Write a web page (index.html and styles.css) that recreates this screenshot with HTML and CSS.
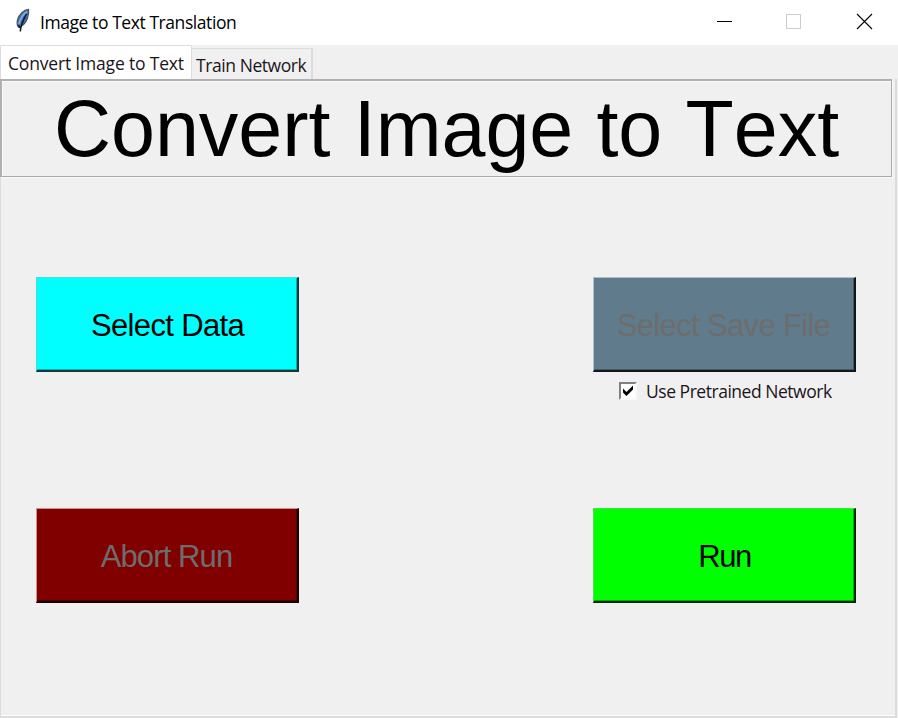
FILE: index.html
```html
<!DOCTYPE html>
<html lang="en">
<head>
<meta charset="utf-8">
<title>Image to Text Translation</title>
<link rel="stylesheet" href="styles.css">
</head>
<body>
<div class="window">
  <header class="titlebar">
    <svg class="feather" width="16" height="26" viewBox="0 0 16 26">
      <path d="M13.500 1.500C9 2 4 6 2.500 12C1.600 16 2.200 18 4 19.500C7.500 18 11 15 12.500 10C13.500 7 14 4 13.500 1.500Z" fill="#3f78b8" stroke="#50555c" stroke-width="1.300"/>
      <path d="M12 3.500C8 6 5.500 10 4 16" fill="none" stroke="#75aee6" stroke-width="1.800"/>
      <path d="M11.500 6C9 11 6 15 5.300 23.500M9 9L10 11M7 13L8.500 14.500M3.500 17L5 20" fill="none" stroke="#111c2a" stroke-width="1.500"/>
    </svg>
    <span class="caption">Image to Text Translation</span>
    <svg class="controls" width="157" height="18" viewBox="0 0 157 18" fill="none">
      <path d="M1 8.500H16" stroke="#000"/>
      <rect x="70.500" y="1.500" width="14" height="14" stroke="#ccc"/>
      <path d="M141 1L156 16M156 1L141 16" stroke="#000" stroke-width="1.100"/>
    </svg>
  </header>
  <nav class="tabs">
    <div class="tab active"><span>Convert Image to Text</span></div>
    <div class="tab"><span>Train Network</span></div>
  </nav>
  <main class="pane">
    <h1 class="heading">Convert Image to Text</h1>
    <div class="grid">
      <button class="btn cyan">Select Data</button>
      <div class="save">
        <button class="btn slate" disabled>Select Save File</button>
        <div class="check">
          <span class="box"><svg width="14" height="14" viewBox="0 0 14 14"><path d="M2 4.500L5.500 8L12 1.500V5.500L5.500 12L2 8.500Z" fill="#000"/></svg></span>
          <span class="check-text">Use Pretrained Network</span>
        </div>
      </div>
      <button class="btn maroon" disabled>Abort Run</button>
      <button class="btn green">Run</button>
    </div>
  </main>
</div>
</body>
</html>
```
FILE: styles.css
```css
* { box-sizing: border-box; }
body { margin: 0; background: #f0f0f0; font-family: "Open Sans", "Noto Sans", sans-serif; color: #000; }
.window { width: 898px; height: 718px; display: flex; flex-direction: column; overflow: hidden; }
.titlebar { height: 45px; flex: none; background: #fff; display: flex; align-items: flex-start; padding: 8px 25px 0 15px; }
.feather { flex: none; }
.caption { margin: 2px 0 0 9px; font-size: 17.5px; line-height: 24px; letter-spacing: -0.43px; white-space: nowrap; }
.controls { margin: 5px 0 0 auto; flex: none; }
.tabs { height: 34px; flex: none; display: flex; align-items: flex-end; }
.tab { height: 31px; width: 121px; border: 1px solid #dcdcdc; border-width: 1px 2px 0 0; padding-left: 4px; font-size: 17.5px; line-height: 32px; letter-spacing: -0.43px; white-space: nowrap; color: #1c1420; }
.tab.active { height: 34px; width: 192px; background: #fff; border-width: 1px 1px 0; padding-left: 7px; line-height: 34px; letter-spacing: -0.18px; }
.pane { flex: 1; width: 897px; border: 1px solid #dcdcdc; border-width: 0 2px 2px 1px; padding-right: 3px; box-shadow: inset 0 -1px #fff; }
.heading { margin: 0 0 0 -1px; width: 892px; height: 98px; border: 1px solid #a9a9a9; border-top: 2px solid #b0b0b0; border-left: 2px solid #b0b0b0; box-shadow: inset 1px 1px #fafafa, 1px 1px #fafafa; font: 79px/96px "Liberation Sans", Arial, sans-serif; font-kerning: none; word-spacing: 1.2px; text-align: center; white-space: nowrap; }
.grid { display: grid; grid-template-columns: 263px 263px; column-gap: 294px; grid-template-rows: 231px 95px; padding: 100px 0 0 35px; }
.btn { display: block; width: 263px; height: 95px; padding: 4px 0 0 1px; border: 1px solid; border-width: 1px 2px 2px 1px; border-radius: 0; font: 31px/88px "Liberation Sans", Arial, sans-serif; letter-spacing: -0.65px; text-align: center; white-space: nowrap; color: #000; }
.btn:disabled { color: #6d6d6d; }
.cyan { background: #0ff; border-color: #48dede #163438 #163438 #48dede; box-shadow: inset -1px -1px #00b4b4; }
.slate { background: #607b8b; border-color: #b0c0c9 #11181c #11181c #b0c0c9; box-shadow: inset -1px -1px #465a66; padding-right: 2px; }
.maroon { background: #800000; border-color: #cf9090 #160000 #160000 #cf9090; box-shadow: inset -1px -1px #500000; letter-spacing: -0.9px; padding-right: 2px; }
.green { background: #0f0; border-color: #48e048 #062806 #062806 #48e048; box-shadow: inset -1px -1px #00b000; letter-spacing: -1.5px; }
.check { display: flex; align-items: center; height: 24px; margin: 7px 0 0 26px; }
.box { width: 18px; height: 18px; background: #fff; border: 2px solid; border-color: #808080 #f8f8f8 #f8f8f8 #808080; margin-right: 9px; display: flex; }
.check-text { font-size: 17.5px; line-height: 24px; letter-spacing: -0.47px; white-space: nowrap; color: #1c1420; }
```
